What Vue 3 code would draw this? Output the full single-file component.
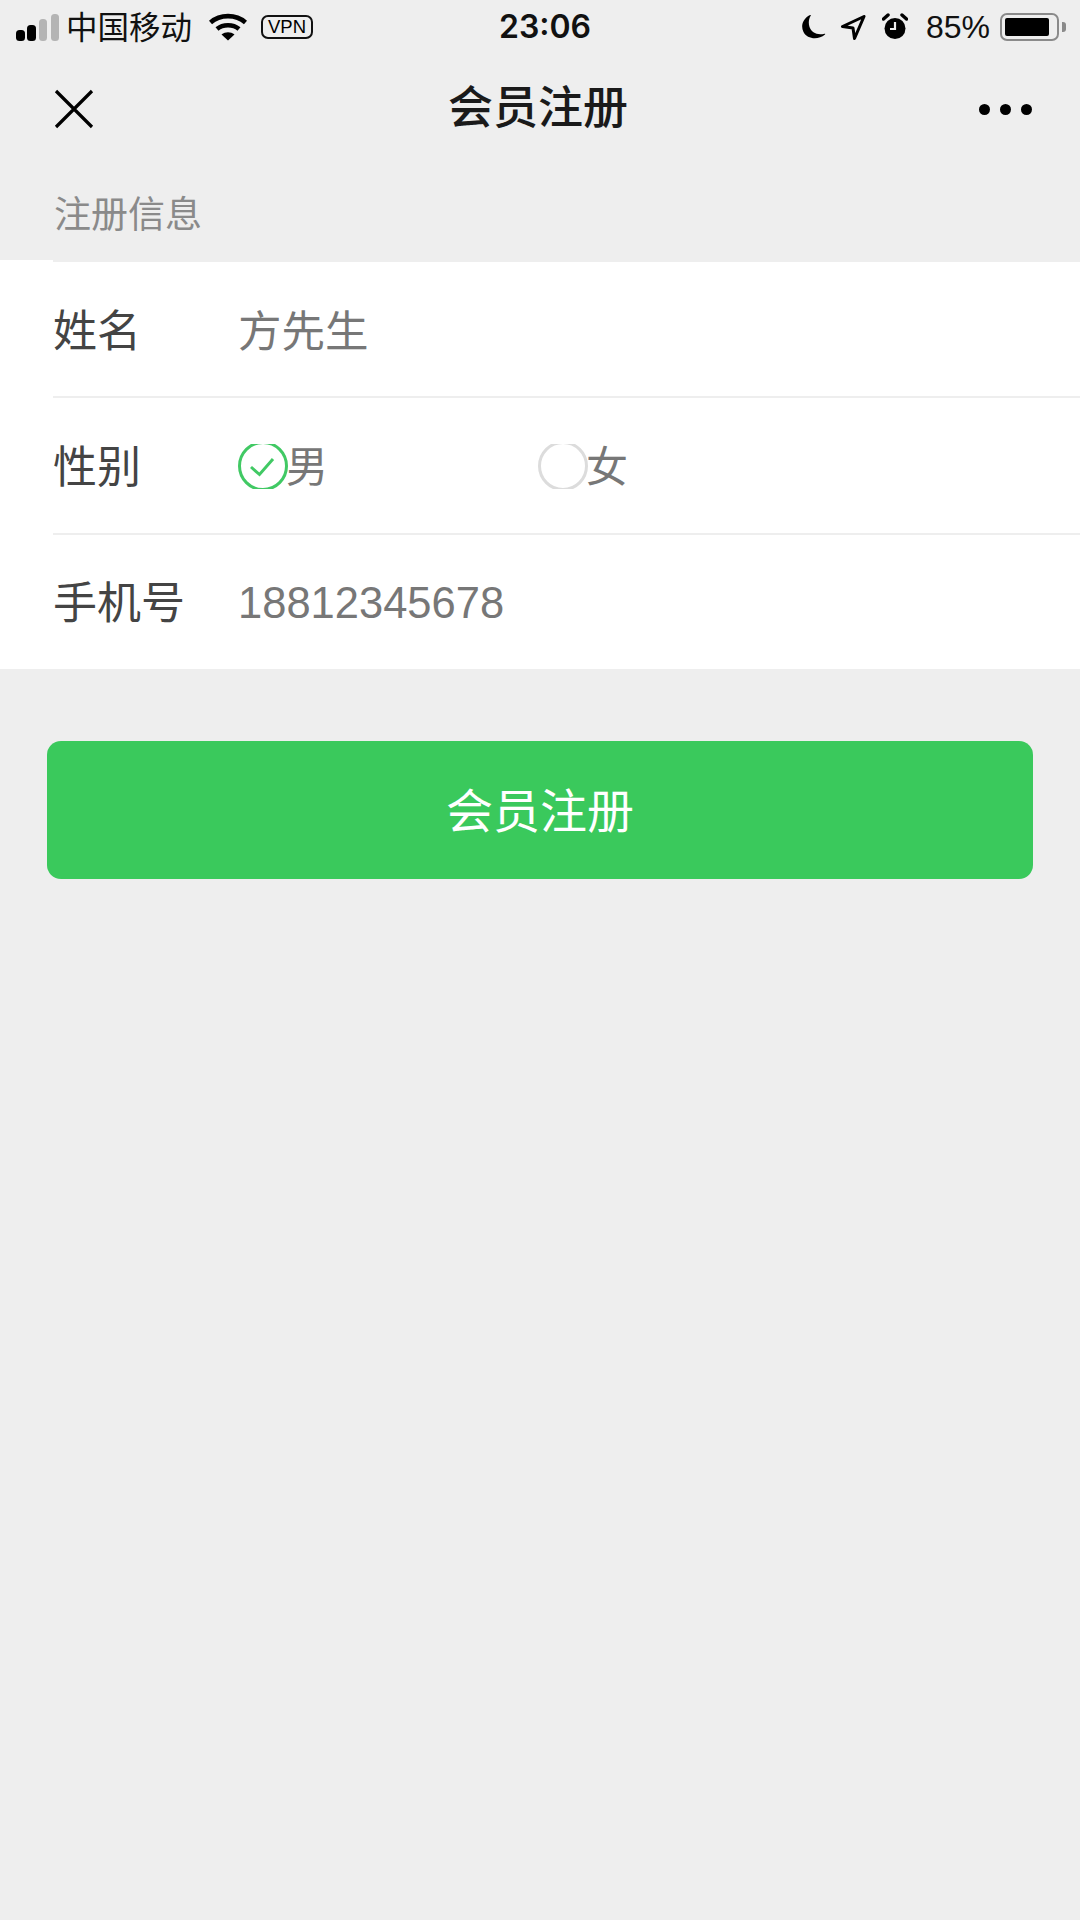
<script setup>
const rows = [
  { label: '姓名', value: '方先生' },
  { label: '手机号', value: '18812345678' }
]
</script>

<template>
  <div class="page">
    <div class="status">
      <div class="status-left">
        <svg class="signal" width="46" height="28" viewBox="0 0 46 28">
          <rect x="1" y="16" width="9" height="11" rx="3.5" fill="#000" />
          <rect x="12" y="11" width="9" height="16" rx="3.5" fill="#000" />
          <rect x="24" y="5" width="8" height="22" rx="3.5" fill="#b4b4b4" />
          <rect x="36" y="0" width="8" height="27" rx="3.5" fill="#b4b4b4" />
        </svg>
        <span class="carrier">中国移动</span>
        <svg class="wifi" width="38" height="28" viewBox="0 0 38 28">
          <path d="M1.5 9.5C11 1 27 1 36.5 9.5" fill="none" stroke="#000" stroke-width="4.6" />
          <path d="M8 16C14 11 24 11 30 16" fill="none" stroke="#000" stroke-width="4.6" />
          <path d="M12.5 21.5C16.5 18.6 21.5 18.6 25.5 21.5L19 27.5Z" fill="#000" />
        </svg>
        <span class="vpn">VPN</span>
      </div>
      <span class="time">23:06</span>
      <div class="status-right">
        <svg width="26" height="26" viewBox="0 0 26 26">
          <path d="M10 1C2.500 5 0.500 12 3.500 18C7 25 18 26.500 25 20.500C25.500 20 25 19.600 24.500 19.700C17 21.500 11.500 18.500 9.500 13C8.300 9 8.600 5 10.700 1.700C11 1.100 10.600 0.700 10 1Z" fill="#000" />
        </svg>
        <svg class="arrow" width="26" height="26" viewBox="0 0 26 26">
          <path d="M24 2.500L2.500 12.500L13 14L14.500 24.500Z" fill="none" stroke="#000" stroke-width="3" stroke-linejoin="round" />
        </svg>
        <svg class="alarm" width="26" height="28" viewBox="0 0 26 28">
          <circle cx="13" cy="15.500" r="10.500" fill="#000" />
          <path d="M13 9V16H8" fill="none" stroke="#ededed" stroke-width="2.200" />
          <path d="M1.500 6L6 2M24.500 6L20 2" stroke="#000" stroke-width="3.400" stroke-linecap="round" />
        </svg>
        <span class="percent">85%</span>
        <div class="battery"><div class="battery-fill"></div></div>
        <div class="battery-cap"></div>
      </div>
    </div>

    <div class="nav">
      <svg width="40" height="40" viewBox="0 0 40 40">
        <path d="M2 2L38 38M38 2L2 38" stroke="#000" stroke-width="3.200" />
      </svg>
      <span class="nav-title">会员注册</span>
      <div class="dots"><i></i><i></i><i></i></div>
    </div>

    <div class="section">注册信息</div>

    <div class="form">
      <div class="row">
        <span class="label">{{ rows[0].label }}</span>
        <span class="value name">{{ rows[0].value }}</span>
      </div>
      <div class="row">
        <span class="label">性别</span>
        <div class="radios">
          <div class="radio">
            <div class="circle-clip">
              <svg width="50" height="50" viewBox="0 0 50 50">
                <circle cx="25" cy="25" r="23.500" fill="none" stroke="#41c964" stroke-width="3" />
                <path d="M13 26L21.500 33.500L35 18" fill="none" stroke="#41c964" stroke-width="3" />
              </svg>
            </div>
            <span class="value">男</span>
          </div>
          <div class="radio">
            <div class="circle-clip">
              <svg width="50" height="50" viewBox="0 0 50 50">
                <circle cx="25" cy="25" r="23.500" fill="none" stroke="#dcdcdc" stroke-width="3" />
              </svg>
            </div>
            <span class="value">女</span>
          </div>
        </div>
      </div>
      <div class="row">
        <span class="label">{{ rows[1].label }}</span>
        <span class="value num">{{ rows[1].value }}</span>
      </div>
    </div>

    <button class="submit"><span>会员注册</span></button>
  </div>
</template>

<style>
html, body { margin: 0; background: #eeeeee; }
</style>

<style scoped>
.page {
  width: 1080px;
  height: 1920px;
  background: #eeeeee;
  overflow: hidden;
  font-family: "Liberation Sans", "Noto Sans CJK SC", sans-serif;
}
.status {
  height: 54px;
  position: relative;
  display: flex;
  align-items: center;
  justify-content: space-between;
  padding: 0 14px 0 15px;
  color: #000;
}
.status-left, .status-right { display: flex; align-items: center; }
.signal { margin-top: 1px; }
.carrier { font-size: 31.500px; margin-left: 5px; color: #111; line-height: 54px; margin-top: 1px; }
.wifi { margin-left: 17px; }
.vpn {
  margin-left: 14px;
  width: 48px;
  height: 20px;
  border: 2.500px solid #111;
  border-radius: 7px;
  font-size: 18.500px;
  line-height: 20px;
  text-align: center;
  letter-spacing: 0;
}
.time {
  position: absolute;
  left: 499px;
  top: 7px;
  font-family: Inter, "Liberation Sans", sans-serif;
  font-size: 32px;
  line-height: 40px;
  font-weight: 600;
  letter-spacing: 0;
  color: #111;
}
.arrow { margin-left: 14px; }
.alarm { margin-left: 16px; }
.percent { font-size: 32px; margin-left: 18px; color: #111; line-height: 54px; }
.battery {
  margin-left: 10px;
  width: 49px;
  height: 18px;
  border: 2.500px solid #8a8a8a;
  border-radius: 7px;
  padding: 3px;
  box-sizing: content-box;
}
.battery-fill { width: 44px; height: 18px; background: #000; border-radius: 2px; }
.battery-cap {
  margin-left: 3px;
  width: 4px;
  height: 10px;
  background: #8a8a8a;
  border-radius: 0 3px 3px 0;
}
.nav {
  height: 110px;
  position: relative;
  display: flex;
  align-items: center;
  justify-content: space-between;
  padding: 0 48px 0 54px;
}
.nav-title {
  position: absolute;
  left: 448px;
  top: 27px;
  font-size: 45px;
  line-height: 56px;
  font-weight: 500;
  color: #1a1a1a;
}
.dots { display: flex; gap: 10px; }
.dots i { width: 11px; height: 11px; border-radius: 50%; background: #000; display: block; }
.section {
  height: 98px;
  box-sizing: border-box;
  padding: 27px 0 0 54px;
  font-size: 37px;
  line-height: 50px;
  color: #8a8a8a;
}
.form { position: relative; background: #fff; height: 407px; display: flex; flex-direction: column; }
.form::before {
  content: "";
  position: absolute;
  left: 0;
  top: -2px;
  width: 53px;
  height: 2px;
  background: #fff;
}
.row {
  flex: 1;
  margin-left: 53px;
  display: flex;
  align-items: center;
  box-sizing: border-box;
  border-bottom: 2px solid #eeeeee;
}
.row:last-child { border-bottom: none; }
.label { width: 185px; font-size: 44px; color: #444; margin-bottom: 2px; }
.value { font-size: 43px; color: #777; }
.name { margin-bottom: 2px; font-size: 43.500px; }
.row:last-child .label { margin-bottom: 4px; }
.num { font-size: 43.500px; margin-top: 4px; }
.radios { display: flex; }
.radio { display: flex; align-items: center; width: 300px; }
.circle-clip {
  width: 50px;
  height: 45px;
  margin-top: 2px;
  overflow: hidden;
  display: flex;
  align-items: center;
  justify-content: center;
}
.circle-clip svg { flex: none; }
.radio .value { font-size: 42px; margin-left: -2px; margin-bottom: 4px; }
.submit {
  display: block;
  margin: 72px 0 0 47px;
  width: 986px;
  height: 138px;
  border: none;
  border-radius: 14px;
  background: #3ac95c;
  color: #fff;
  font-family: inherit;
  font-size: 47px;
  padding: 0 0 5px;
}
</style>
